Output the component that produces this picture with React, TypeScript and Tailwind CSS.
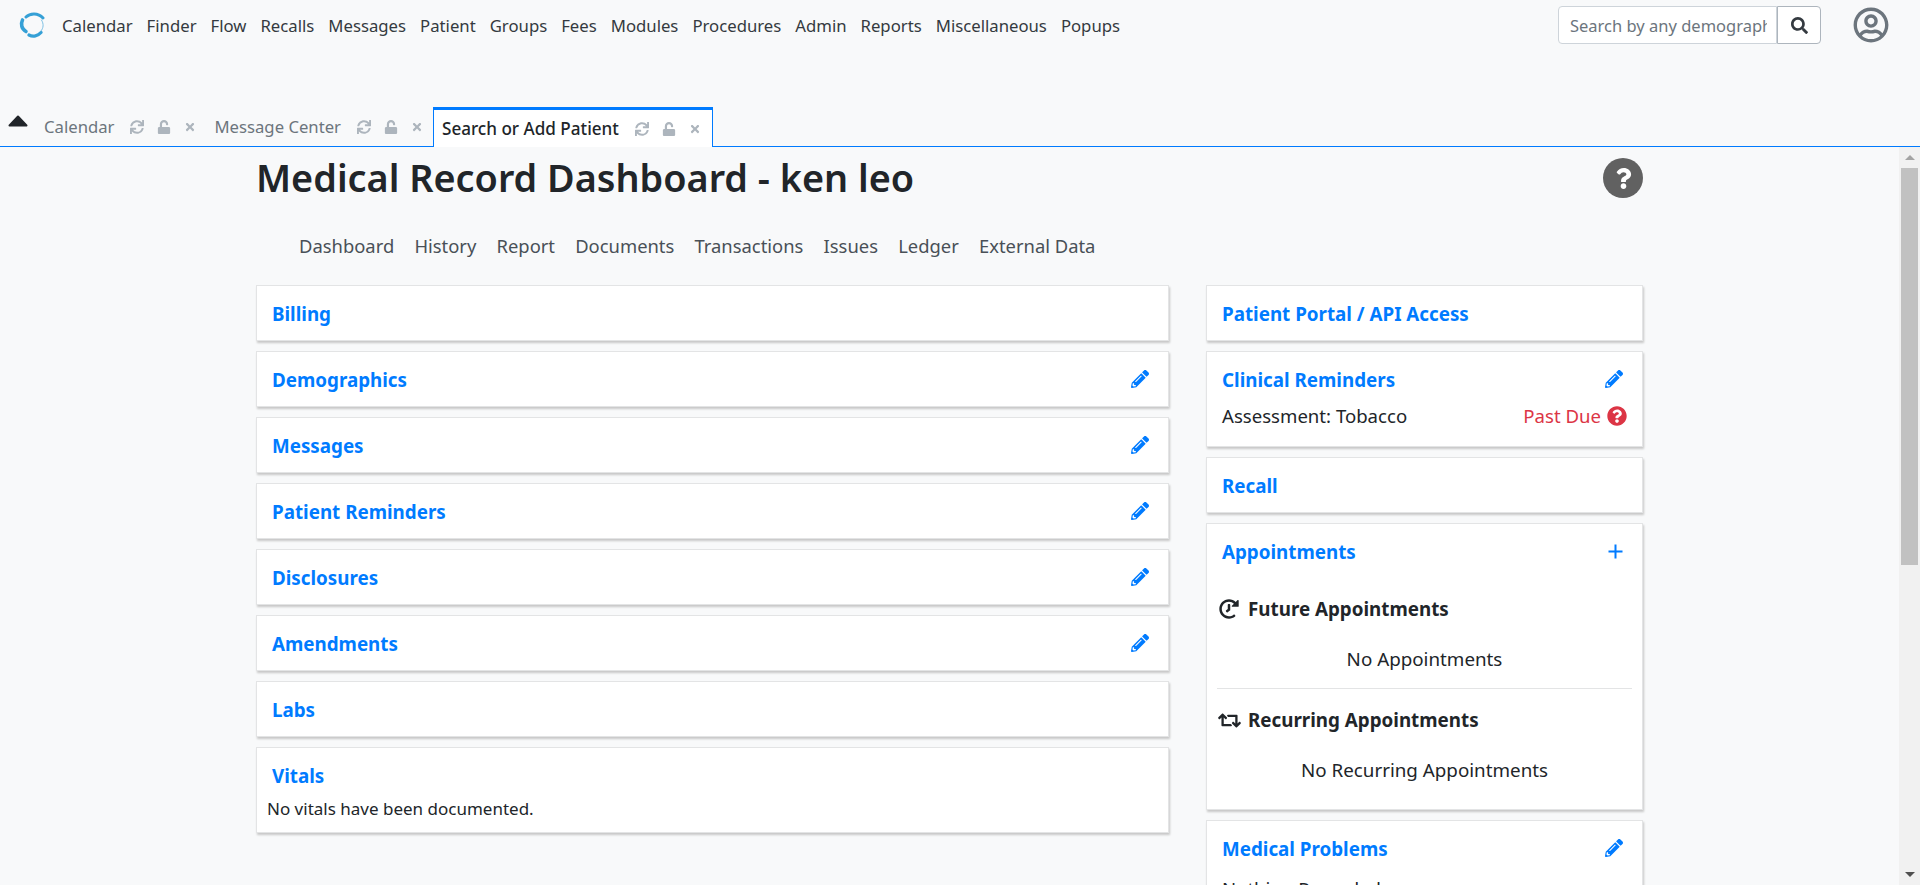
import React from "react";
import { FaPencilAlt, FaQuestion, FaQuestionCircle, FaRegUserCircle, FaRetweet, FaSearch, FaSync, FaTimes, FaHistory, FaUnlock } from "react-icons/fa";

const menu = ["Calendar", "Finder", "Flow", "Recalls", "Messages", "Patient", "Groups", "Fees", "Modules", "Procedures", "Admin", "Reports", "Miscellaneous", "Popups"];
const subNav = ["Dashboard", "History", "Report", "Documents", "Transactions", "Issues", "Ledger", "External Data"];
const leftCards = [
    { title: "Billing", edit: false },
    { title: "Demographics", edit: true },
    { title: "Messages", edit: true },
    { title: "Patient Reminders", edit: true },
    { title: "Disclosures", edit: true },
    { title: "Amendments", edit: true },
    { title: "Labs", edit: false },
];

const cardClass = "bg-white border border-[#e3e4e5] shadow-[1px_2px_2px_#c8c8c8]";

const Logo: React.FC = () => (
    <svg width="26" height="26" viewBox="0 0 26 26" fill="none" className="shrink-0">
        <path d="M7 5 C11 1 19 0.500 24 6" stroke="#35a0d6" strokeWidth="3" strokeLinecap="round" />
        <path d="M3.500 8 C1.500 12 2.500 17 7 19.500" stroke="#35a0d6" strokeWidth="3.600" strokeLinecap="round" />
        <path d="M10 23 C14 25 19 24 22 20.500" stroke="#35a0d6" strokeWidth="3.200" strokeLinecap="round" />
        <path d="M22.500 8 C25 12 24.500 16 22 19" stroke="#7cc0e4" strokeWidth="1" strokeLinecap="round" />
    </svg>
);

const Tab: React.FC<{ label: string; active?: boolean }> = ({ label, active }) => (
    <div
        className={
            active
                ? "flex items-center h-[40px] ml-px pl-[8px] pr-[11px] bg-white border-x border-[#007bff] border-t-[3px] -mb-px text-[#212529] font-medium text-[17.100px]"
                : "flex items-center h-[38px] px-[9px] text-[#6c757d] text-[16.700px]"
        }
    >
        <span className="mr-[16px]">{label}</span>
        <FaSync className="text-[#adb5bd] text-[14px] mr-[13px]" />
        <FaUnlock className="text-[#adb5bd] text-[14px] mr-[13px]" />
        <FaTimes className="text-[#adb5bd] text-[12px]" />
    </div>
);

const Card: React.FC<{ title: string; edit?: boolean; plus?: boolean; children?: React.ReactNode }> = ({ title, edit, plus, children }) => (
    <div className={cardClass}>
        <div className="flex items-center justify-between h-[54px] pl-[15px] pr-[19px]">
            <span className="text-[#007bff] font-bold text-[18.800px] pt-[3px]">{title}</span>
            {edit && <FaPencilAlt className="text-[#007bff] text-[18px]" />}
            {plus && (
                <svg width="15" height="15" viewBox="0 0 15 15" className="text-[#007bff]">
                    <path d="M7.500 0.500V14.500M0.500 7.500H14.500" stroke="currentColor" strokeWidth="2" />
                </svg>
            )}
        </div>
        {children}
    </div>
);

export default function App() {
    return (
        <div className="h-[885px] w-[1920px] overflow-hidden bg-[#f8f9fa] text-[#212529] flex flex-col font-['Noto_Sans',sans-serif] text-[17px]">
            {/* top menu */}
            <div className="flex items-center h-[50px] pl-[19px] shrink-0">
                <Logo />
                <ul className="flex gap-[14px] ml-[17px] pt-[2px] text-[#343a40] text-[16.730px]">
                    {menu.map((m) => (
                        <li key={m}>{m}</li>
                    ))}
                </ul>
                <div className="flex ml-auto h-[38px]">
                    <input
                        placeholder="Search by any demographics"
                        className="w-[219px] h-full bg-white border border-[#ced4da] rounded-l pl-[11px] pr-[9px] text-[16.500px] outline-none placeholder:text-[#6c757d]"
                    />
                    <div className="w-[44px] bg-white border border-[#adb5bd] rounded-r flex items-center justify-center text-[#343a40]">
                        <FaSearch className="text-[17px]" />
                    </div>
                </div>
                <FaRegUserCircle className="text-[#6c757d] text-[36px] ml-[32px] mr-[31px]" />
            </div>
            {/* tabs */}
            <div className="flex items-end h-[97px] shrink-0 border-b border-[#007bff] pl-[8px]">
                <svg width="20" height="12" viewBox="0 0 20 12" className="mb-[19px] mr-[7px] shrink-0 text-[#212529]">
                    <path d="M10 1.500L18.500 10.500H1.500Z" fill="currentColor" stroke="currentColor" strokeWidth="2" strokeLinejoin="round" />
                </svg>
                <Tab label="Calendar" />
                <Tab label="Message Center" />
                <Tab label="Search or Add Patient" active />
            </div>
            <div className="flex flex-1 min-h-0">
                <div className="flex-1 min-w-0 overflow-hidden pl-[256px] pr-[256px]">
                    <div className="flex items-center justify-between h-[62px]">
                        <h1 className="text-[37.800px] font-semibold leading-none">Medical Record Dashboard - ken leo</h1>
                        <div className="w-10 h-10 rounded-full bg-[#616161] flex items-center justify-center">
                            <FaQuestion className="text-white text-[21px]" />
                        </div>
                    </div>
                    <ul className="flex gap-[20.200px] pl-[43px] h-[74px] mb-[2px] items-center text-[18.400px] text-[#495057]">
                        {subNav.map((s) => (
                            <li key={s}>{s}</li>
                        ))}
                    </ul>
                    <div className="flex gap-[37px] items-start">
                        <div className="flex flex-col gap-[10px] w-[913px] shrink-0">
                            {leftCards.map((c) => (
                                <Card key={c.title} title={c.title} edit={c.edit} />
                            ))}
                            <Card title="Vitals">
                                <p className="pl-[10px] pb-[11px] -mt-[6px] leading-[25px]">No vitals have been documented.</p>
                            </Card>
                        </div>
                        <div className="flex flex-col gap-[10px] w-[437px] shrink-0">
                            <Card title="Patient Portal / API Access" />
                            <Card title="Clinical Reminders" edit>
                                <div className="flex justify-between items-center -mt-[4px] px-[15px] pb-[16px] text-[18.600px] leading-[28px]">
                                    <span>Assessment: Tobacco</span>
                                    <span className="flex items-center gap-[6px] text-[#dc3545]">
                                        Past Due <FaQuestionCircle className="text-[20px]" />
                                    </span>
                                </div>
                            </Card>
                            <Card title="Recall" />
                            <Card title="Appointments" plus>
                                <div className="px-[10px] text-[18.800px] leading-[28px]">
                                    <div className="flex items-center font-bold h-[34px] mt-[14px]">
                                        <span className="w-[31px] shrink-0 pl-[2px]">
                                            <FaHistory className="text-[20px] -scale-x-100" />
                                        </span>
                                        Future Appointments
                                    </div>
                                    <p className="text-center mt-[19px] pb-[15px] border-b border-[#e3e4e5]">No Appointments</p>
                                    <div className="flex items-center font-bold h-[34px] mt-[14px]">
                                        <span className="w-[31px] shrink-0 pl-px">
                                            <FaRetweet className="text-[23px]" />
                                        </span>
                                        Recurring Appointments
                                    </div>
                                    <p className="text-center mt-[19px] pb-[25px]">No Recurring Appointments</p>
                                </div>
                            </Card>
                            <Card title="Medical Problems" edit>
                                <p className="pl-[15px] text-[18.600px] leading-[28px]">Nothing Recorded</p>
                            </Card>
                        </div>
                    </div>
                </div>
                {/* scrollbar */}
                <div className="w-[21px] shrink-0 bg-[#f1f1f1] flex flex-col items-center">
                    <div className="h-[21px] flex items-center justify-center">
                        <div className="w-0 h-0 border-x-[5px] border-x-transparent border-b-[5px] border-b-[#a3a3a3]" />
                    </div>
                    <div className="w-[17px] h-[397px] bg-[#c1c1c1]" />
                    <div className="mt-auto h-[21px] flex items-center justify-center">
                        <div className="w-0 h-0 border-x-[5px] border-x-transparent border-t-[5px] border-t-[#505050]" />
                    </div>
                </div>
            </div>
        </div>
    );
}
